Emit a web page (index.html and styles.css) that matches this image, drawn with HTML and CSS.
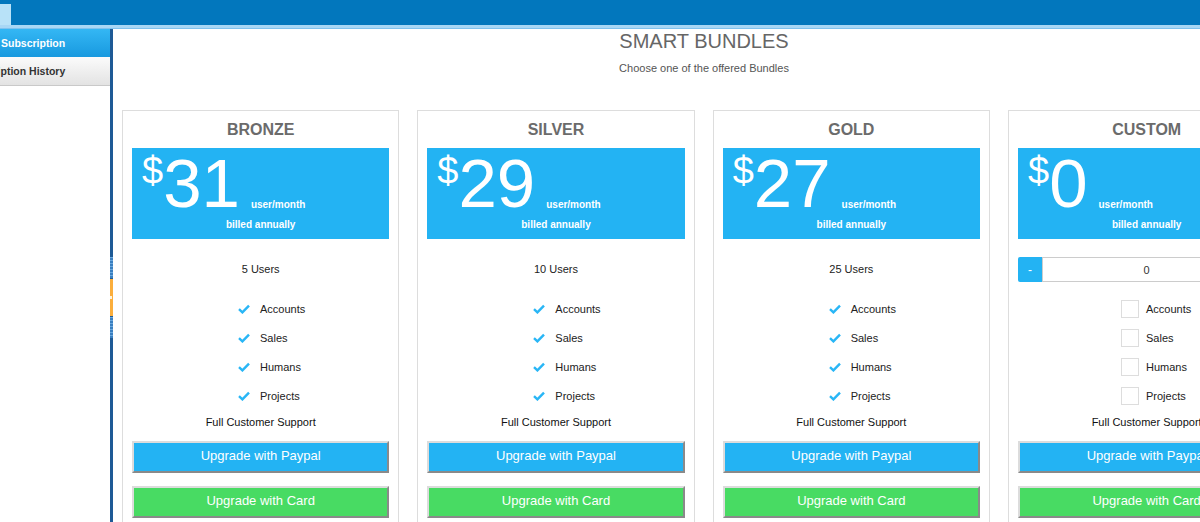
FILE: index.html
```html
<!DOCTYPE html>
<html lang="en">
<head>
<meta charset="utf-8">
<title>Smart Bundles</title>
<link rel="stylesheet" href="styles.css">
</head>
<body>
<header class="topbar"><div class="tab"></div></header>
<div class="strip"></div>
<div class="layout">
  <nav class="sidebar">
    <a class="nav-item active"><span>Subscription</span></a>
    <a class="nav-item"><span class="cut">Subscription History</span></a>
  </nav>
  <div class="splitter">
    <div class="handle">
      <span class="grip"></span>
      <span class="knob"><i class="dot"></i></span>
      <span class="grip"></span>
    </div>
  </div>
  <main class="main">
    <h1 class="title">SMART BUNDLES</h1>
    <p class="subtitle">Choose one of the offered Bundles</p>
    <div class="cards">
      <section class="card">
        <h2 class="card-title">BRONZE</h2>
        <div class="price">
          <div class="price-row"><span class="cur">$</span><span class="amt">31</span><span class="per">user/month</span></div>
          <div class="billed">billed annually</div>
        </div>
        <div class="users">5 Users</div>
        <ul class="features">
          <li><span class="mark"><svg width="12" height="10" viewBox="0 0 12 10"><path d="M1 5.2 L4.4 8.4 L11 1.6" fill="none" stroke="#29b6f6" stroke-width="2.4"/></svg></span>Accounts</li>
          <li><span class="mark"><svg width="12" height="10" viewBox="0 0 12 10"><path d="M1 5.2 L4.4 8.4 L11 1.6" fill="none" stroke="#29b6f6" stroke-width="2.4"/></svg></span>Sales</li>
          <li><span class="mark"><svg width="12" height="10" viewBox="0 0 12 10"><path d="M1 5.2 L4.4 8.4 L11 1.6" fill="none" stroke="#29b6f6" stroke-width="2.4"/></svg></span>Humans</li>
          <li><span class="mark"><svg width="12" height="10" viewBox="0 0 12 10"><path d="M1 5.2 L4.4 8.4 L11 1.6" fill="none" stroke="#29b6f6" stroke-width="2.4"/></svg></span>Projects</li>
        </ul>
        <div class="support">Full Customer Support</div>
        <button class="btn paypal">Upgrade with Paypal</button>
        <button class="btn card-pay">Upgrade with Card</button>
      </section>
      <section class="card">
        <h2 class="card-title">SILVER</h2>
        <div class="price">
          <div class="price-row"><span class="cur">$</span><span class="amt">29</span><span class="per">user/month</span></div>
          <div class="billed">billed annually</div>
        </div>
        <div class="users">10 Users</div>
        <ul class="features">
          <li><span class="mark"><svg width="12" height="10" viewBox="0 0 12 10"><path d="M1 5.2 L4.4 8.4 L11 1.6" fill="none" stroke="#29b6f6" stroke-width="2.4"/></svg></span>Accounts</li>
          <li><span class="mark"><svg width="12" height="10" viewBox="0 0 12 10"><path d="M1 5.2 L4.4 8.4 L11 1.6" fill="none" stroke="#29b6f6" stroke-width="2.4"/></svg></span>Sales</li>
          <li><span class="mark"><svg width="12" height="10" viewBox="0 0 12 10"><path d="M1 5.2 L4.4 8.4 L11 1.6" fill="none" stroke="#29b6f6" stroke-width="2.4"/></svg></span>Humans</li>
          <li><span class="mark"><svg width="12" height="10" viewBox="0 0 12 10"><path d="M1 5.2 L4.4 8.4 L11 1.6" fill="none" stroke="#29b6f6" stroke-width="2.4"/></svg></span>Projects</li>
        </ul>
        <div class="support">Full Customer Support</div>
        <button class="btn paypal">Upgrade with Paypal</button>
        <button class="btn card-pay">Upgrade with Card</button>
      </section>
      <section class="card">
        <h2 class="card-title">GOLD</h2>
        <div class="price">
          <div class="price-row"><span class="cur">$</span><span class="amt">27</span><span class="per">user/month</span></div>
          <div class="billed">billed annually</div>
        </div>
        <div class="users">25 Users</div>
        <ul class="features">
          <li><span class="mark"><svg width="12" height="10" viewBox="0 0 12 10"><path d="M1 5.2 L4.4 8.4 L11 1.6" fill="none" stroke="#29b6f6" stroke-width="2.4"/></svg></span>Accounts</li>
          <li><span class="mark"><svg width="12" height="10" viewBox="0 0 12 10"><path d="M1 5.2 L4.4 8.4 L11 1.6" fill="none" stroke="#29b6f6" stroke-width="2.4"/></svg></span>Sales</li>
          <li><span class="mark"><svg width="12" height="10" viewBox="0 0 12 10"><path d="M1 5.2 L4.4 8.4 L11 1.6" fill="none" stroke="#29b6f6" stroke-width="2.4"/></svg></span>Humans</li>
          <li><span class="mark"><svg width="12" height="10" viewBox="0 0 12 10"><path d="M1 5.2 L4.4 8.4 L11 1.6" fill="none" stroke="#29b6f6" stroke-width="2.4"/></svg></span>Projects</li>
        </ul>
        <div class="support">Full Customer Support</div>
        <button class="btn paypal">Upgrade with Paypal</button>
        <button class="btn card-pay">Upgrade with Card</button>
      </section>
      <section class="card">
        <h2 class="card-title">CUSTOM</h2>
        <div class="price">
          <div class="price-row"><span class="cur">$</span><span class="amt">0</span><span class="per">user/month</span></div>
          <div class="billed">billed annually</div>
        </div>
        <div class="stepper">
          <button class="step">-</button>
          <input class="qty" type="text" value="0">
          <button class="step">+</button>
        </div>
        <ul class="features">
          <li><span class="mark box"></span>Accounts</li>
          <li><span class="mark box"></span>Sales</li>
          <li><span class="mark box"></span>Humans</li>
          <li><span class="mark box"></span>Projects</li>
        </ul>
        <div class="support">Full Customer Support</div>
        <button class="btn paypal">Upgrade with Paypal</button>
        <button class="btn card-pay">Upgrade with Card</button>
      </section>
    </div>
  </main>
</div>
</body>
</html>
```
FILE: styles.css
```css
* { box-sizing: border-box; }
html, body {
  margin: 0;
  width: 1200px;
  height: 522px;
  overflow: hidden;
  background: #fff;
  font-family: "Liberation Sans", Arial, sans-serif;
}
.topbar {
  height: 25px;
  background: #0277bd;
  display: flex;
  align-items: flex-end;
}
.tab {
  width: 11px;
  height: 21px;
  background: #b8e2f8;
}
.strip {
  height: 4px;
  background: #a8d7f5;
  border-bottom: 1px solid #7fc2ee;
}
.layout {
  display: flex;
  height: 493px;
}
.sidebar {
  width: 110px;
  flex-shrink: 0;
}
.nav-item {
  display: block;
  height: 28px;
  line-height: 28px;
  font-size: 10.5px;
  font-weight: bold;
  white-space: nowrap;
  overflow: hidden;
  padding-left: 1px;
}
.nav-item.active {
  background: linear-gradient(#34b7f4, #1899df);
  color: #fff;
}
.nav-item + .nav-item {
  height: 29px;
  background: linear-gradient(#fbfbfb, #e3e3e3);
  color: #333;
  border-bottom: 1px solid #c9c9c9;
}
.cut {
  display: inline-block;
  margin-left: -39px;
}
.splitter {
  width: 3px;
  flex-shrink: 0;
  background: #1e5a96;
}
.handle {
  margin-top: 228px;
  display: flex;
  flex-direction: column;
}
.grip {
  height: 21px;
  background: repeating-linear-gradient(#6aa8de 0 1px, #3a7fc0 1px 3px);
}
.knob {
  height: 37px;
  margin: 1px 0;
  background: #fbae3c;
  display: flex;
  align-items: center;
}
.dot {
  width: 2px;
  height: 3px;
  background: #fff3dc;
}
.main {
  width: 1182px;
  flex-shrink: 0;
}
.title {
  margin: 0;
  font-size: 20px;
  line-height: 24px;
  font-weight: normal;
  color: #666;
  text-align: center;
}
.subtitle {
  margin: 8px 0 0;
  font-size: 11px;
  line-height: 14px;
  color: #555;
  text-align: center;
}
.cards {
  margin-top: 35px;
  padding-left: 9px;
  display: grid;
  grid-template-columns: repeat(4, 277.33px);
  column-gap: 18px;
}
.card {
  border: 1px solid #ddd;
  padding: 9px 9px 20px;
}
.card-title {
  margin: 0 0 8px;
  font-size: 16px;
  line-height: 20px;
  font-weight: bold;
  color: #6b6b6b;
  text-align: center;
}
.price {
  background: #23b3f3;
  color: #fff;
  padding: 1px 0 7px;
}
.price-row {
  display: flex;
  align-items: baseline;
  padding-left: 10px;
}
.cur {
  align-self: flex-start;
  margin-top: 3px;
  font-size: 38px;
  line-height: 38px;
}
.amt {
  font-size: 69px;
  line-height: 70px;
}
.per {
  align-self: flex-end;
  margin: 0 0 7px 11px;
  font-size: 10px;
  line-height: 14px;
  font-weight: bold;
}
.billed {
  margin-top: -1px;
  font-size: 10px;
  line-height: 14px;
  font-weight: bold;
  text-align: center;
}
.users {
  margin-top: 17px;
  height: 25px;
  display: flex;
  align-items: center;
  justify-content: center;
  font-size: 11px;
  color: #222;
}
.stepper {
  margin-top: 18px;
  margin-bottom: -1px;
  height: 25px;
  display: flex;
}
.step {
  width: 24px;
  height: 25px;
  border: none;
  background: #23b3f3;
  color: #fff;
  font-family: inherit;
  font-size: 12px;
  padding: 0;
  flex-shrink: 0;
}
.step:first-child { border-radius: 2px 0 0 2px; }
.qty {
  flex: 1;
  min-width: 0;
  height: 25px;
  border: 1px solid #ccc;
  text-align: center;
  font-family: inherit;
  font-size: 11px;
  color: #333;
  padding: 0;
}
.features {
  list-style: none;
  margin: 13px 0 0;
  padding: 0 0 0 103px;
}
.features li {
  height: 29px;
  display: flex;
  align-items: center;
  font-size: 11px;
  color: #222;
}
.mark {
  width: 18px;
  height: 18px;
  margin-right: 7px;
  display: flex;
  align-items: center;
  justify-content: center;
  flex-shrink: 0;
}
.mark.box {
  border: 1px solid #ddd;
  background: #fff;
}
.support {
  margin-top: 5px;
  font-size: 11px;
  line-height: 14px;
  color: #111;
  text-align: center;
  white-space: nowrap;
}
.btn {
  display: block;
  width: 100%;
  height: 32px;
  border: 2px solid;
  border-color: #dcdcdc #8a8a8a #8a8a8a #dcdcdc;
  color: #fff;
  font-family: inherit;
  font-size: 13px;
  padding: 0 0 3px;
  white-space: nowrap;
}
.paypal {
  margin-top: 12px;
  background: #23b3f3;
}
.card-pay {
  margin-top: 13px;
  background: #48db63;
}
```
